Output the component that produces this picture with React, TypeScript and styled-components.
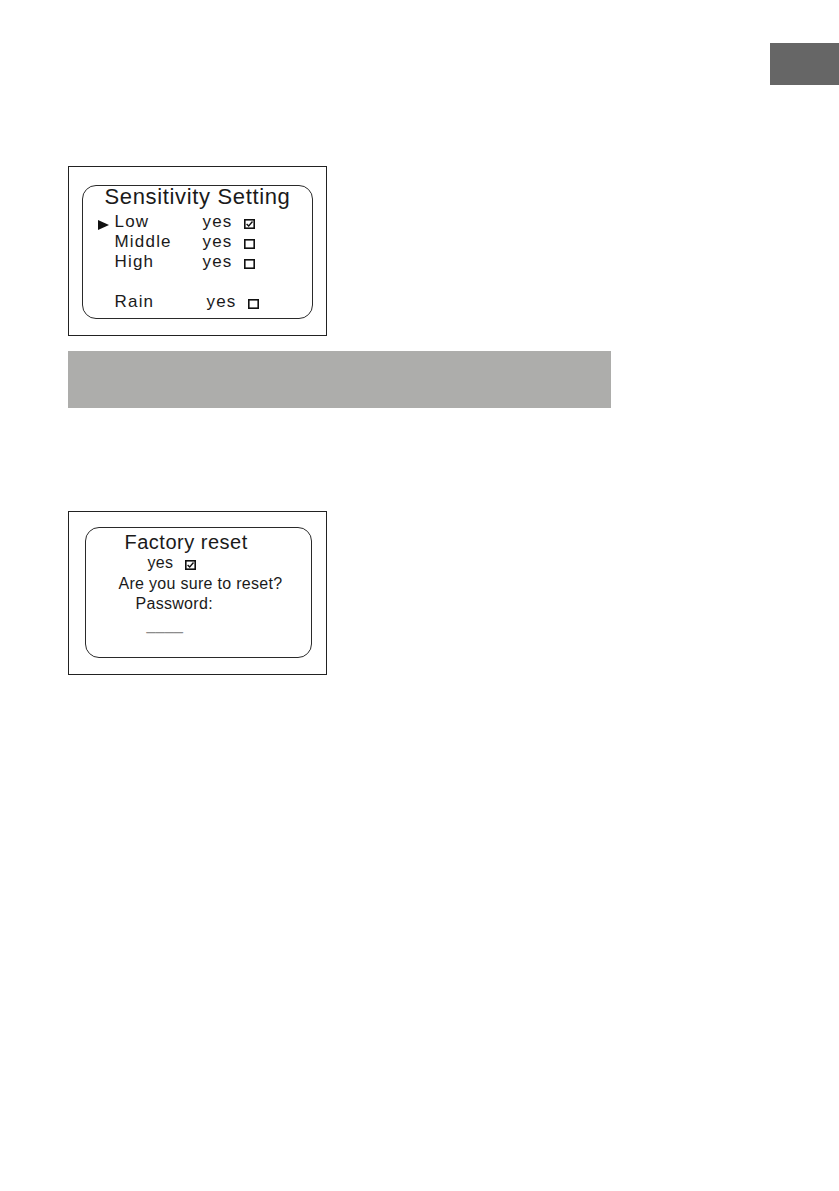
import React from 'react'
import styled, { createGlobalStyle } from 'styled-components'

const GlobalStyle = createGlobalStyle`
  html, body {
    margin: 0;
    padding: 0;
    background: #ffffff;
  }
  body {
    font-family: "Liberation Sans", Arial, Helvetica, sans-serif;
    color: #1a1a1a;
  }
`

const Page = styled.div`
  display: flex;
  flex-direction: column;
  width: 839px;
  min-height: 1191px;
  padding-top: 43px;
  box-sizing: border-box;
`

const TabRow = styled.div`
  display: flex;
  justify-content: flex-end;
`

const LangTab = styled.div`
  width: 69px;
  height: 42px;
  background: #666666;
`

const Body = styled.div`
  display: flex;
  flex-direction: column;
  align-items: flex-start;
  padding-left: 68px;
`

const Frame = styled.div<{ $top: number; $height: number; $pad: string }>`
  margin-top: ${({ $top }) => $top}px;
  width: 259px;
  height: ${({ $height }) => $height}px;
  padding: ${({ $pad }) => $pad};
  box-sizing: border-box;
  border: 1px solid #222;
  display: flex;
`

const Screen = styled.div<{ $padTop?: number }>`
  flex: 1;
  border: 1.5px solid #2a2a2a;
  border-radius: 14px;
  padding-top: ${({ $padTop }) => $padTop ?? 0}px;
  display: flex;
  flex-direction: column;
`

const ScreenTitle = styled.div`
  font-size: 22px;
  line-height: 22px;
  letter-spacing: 0.65px;
  text-align: center;
  white-space: nowrap;
`

const OptionList = styled.div`
  display: flex;
  flex-direction: column;
  margin-top: 4px;
  padding-left: 14.5px;
`

const OptionRow = styled.div<{ $labelWidth: number; $gapAbove?: number }>`
  display: grid;
  grid-template-columns: 17px ${({ $labelWidth }) => $labelWidth}px 41px auto;
  align-items: center;
  margin-top: ${({ $gapAbove }) => $gapAbove ?? 0}px;
  font-size: 17px;
  line-height: 20px;
  letter-spacing: 1.2px;
  white-space: nowrap;
`

const Pointer = styled.span<{ $visible: boolean }>`
  width: 0;
  height: 0;
  margin-top: 5px;
  border-top: 5.5px solid transparent;
  border-bottom: 5.5px solid transparent;
  border-left: 11px solid ${({ $visible }) => ($visible ? '#111' : 'transparent')};
`

const BoxIcon = styled.svg`
  display: block;
  margin-top: 4px;
`

const Banner = styled.div`
  margin-top: 15px;
  width: 543px;
  height: 57px;
  background: #adadab;
`

const Line = styled.div<{ $indent: number; $size: number; $height: number; $muted?: boolean }>`
  display: flex;
  align-items: center;
  gap: 12px;
  padding-left: ${({ $indent }) => $indent}px;
  font-size: ${({ $size }) => $size}px;
  line-height: ${({ $height }) => $height}px;
  letter-spacing: ${({ $size }) => ($size > 17 ? 0.5 : 0.3)}px;
  color: ${({ $muted }) => ($muted ? '#8c8c8c' : 'inherit')};
  white-space: nowrap;
`

const Checkbox: React.FC<{ checked: boolean }> = ({ checked }) => (
  <BoxIcon width="11" height="10" viewBox="0 0 11 10">
    <rect x="0.8" y="0.8" width="9.4" height="8.4" fill="none" stroke="#111" strokeWidth="1.6" />
    {checked && (
      <path d="M2.6 4.9 L4.7 6.9 L8.5 2.5" fill="none" stroke="#111" strokeWidth="1.4" />
    )}
  </BoxIcon>
)

const options = [
  { label: 'Low', checked: true, selected: true, labelWidth: 88, gap: 0 },
  { label: 'Middle', checked: false, selected: false, labelWidth: 88, gap: 0 },
  { label: 'High', checked: false, selected: false, labelWidth: 88, gap: 0 },
  { label: 'Rain', checked: false, selected: false, labelWidth: 92, gap: 20 },
]

const App: React.FC = () => (
  <>
    <GlobalStyle />
    <Page>
      <TabRow>
        <LangTab />
      </TabRow>
      <Body>
        <Frame $top={81} $height={170} $pad="18px 13px 16px 13px">
          <Screen>
            <ScreenTitle>Sensitivity Setting</ScreenTitle>
            <OptionList>
              {options.map((o) => (
                <OptionRow key={o.label} $labelWidth={o.labelWidth} $gapAbove={o.gap}>
                  <Pointer $visible={o.selected} />
                  <span>{o.label}</span>
                  <span>yes</span>
                  <Checkbox checked={o.checked} />
                </OptionRow>
              ))}
            </OptionList>
          </Screen>
        </Frame>

        <Banner />

        <Frame $top={103} $height={164} $pad="15px 14px 16px 16px">
          <Screen $padTop={3}>
            <Line $indent={38.5} $size={20} $height={22}>
              Factory reset
            </Line>
            <Line $indent={61.5} $size={16} $height={20.5}>
              <span>yes</span>
              <Checkbox checked />
            </Line>
            <Line $indent={32.5} $size={16} $height={20.5}>
              Are you sure to reset?
            </Line>
            <Line $indent={49.5} $size={16} $height={20.5}>
              Password:
            </Line>
            <Line $indent={60.5} $size={16} $height={20.5} $muted>
              ____
            </Line>
          </Screen>
        </Frame>
      </Body>
    </Page>
  </>
)

export default App
